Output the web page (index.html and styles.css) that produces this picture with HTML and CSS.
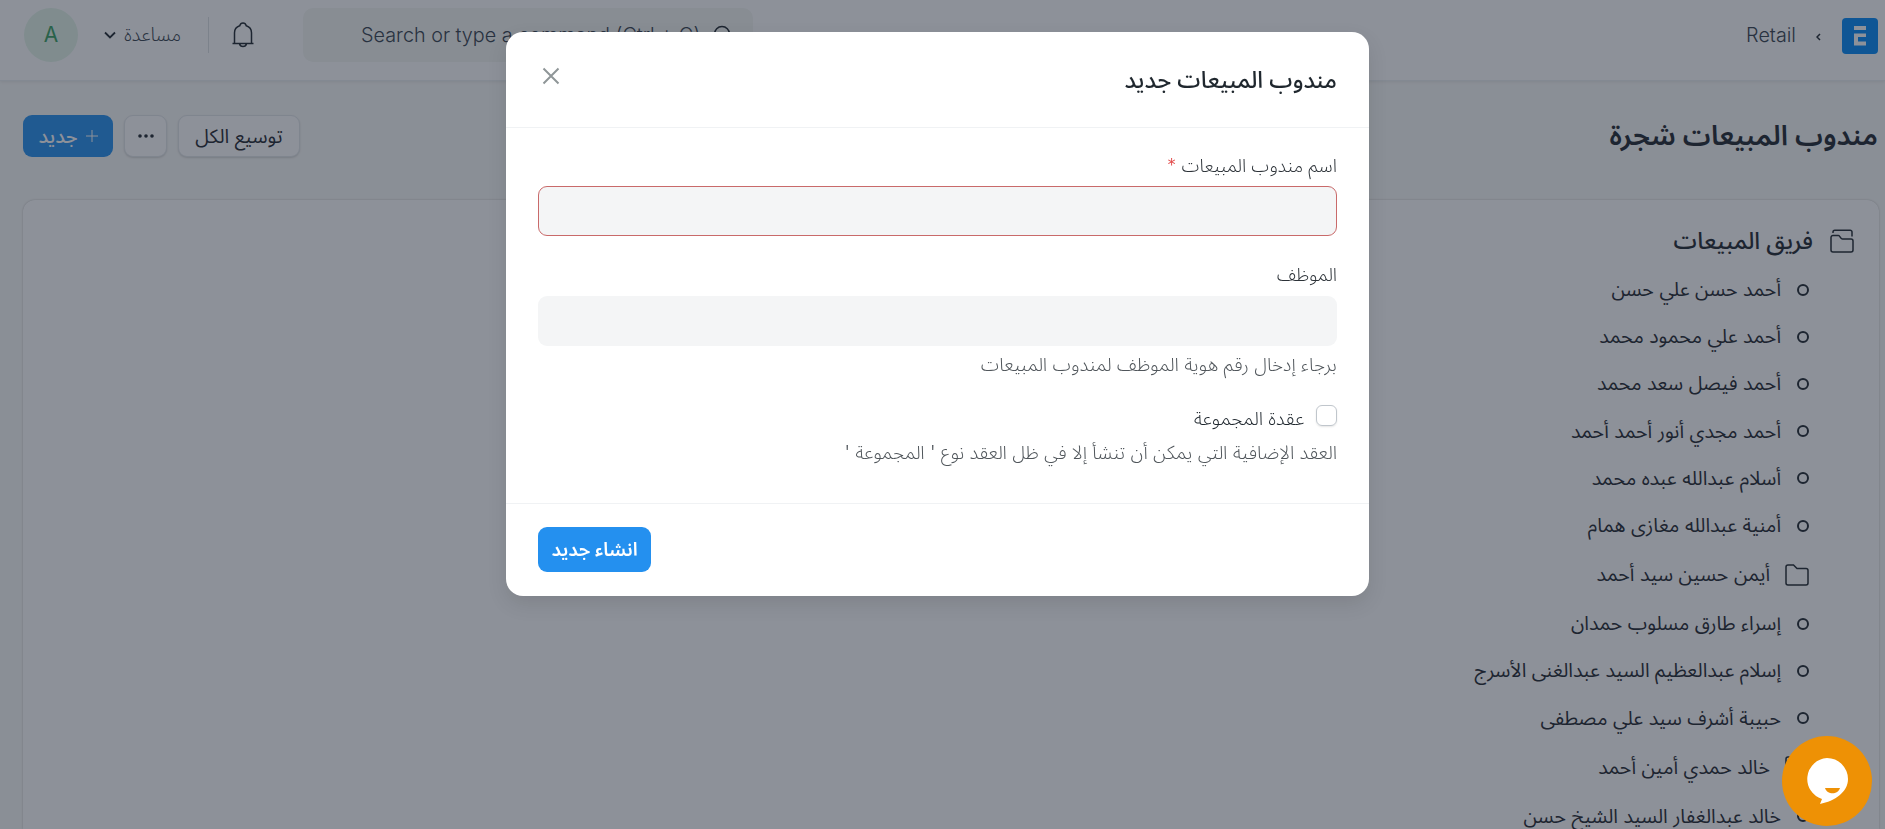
FILE: index.html
```
<!DOCTYPE html>
<html lang="ar" dir="rtl">
<head>
    <meta charset="UTF-8">
    <meta name="viewport" content="width=device-width, initial-scale=1.0">
    <title>مندوب المبيعات شجرة</title>
    <link rel="stylesheet" href="styles.css">
</head>
<body>
    <header class="navbar">
        <div class="brand">
            <svg class="logo" viewBox="0 0 36 36">
                <rect width="36" height="36" rx="4" fill="#0289f7"/>
                <path d="M12 8h12v4H12zM12 15.500h12v3.500h-8v4.500h8v4H12z" fill="#fff"/>
            </svg>
            <svg class="crumb-arrow" viewBox="0 0 5 8"><path d="M4 1L1 4l3 3"/></svg>
            <a class="crumb">Retail</a>
        </div>
        <div class="nav-tools">
            <div class="search">
                <svg class="search-icon" viewBox="0 0 20 20"><circle cx="9" cy="9" r="7.500"/><path d="M14.500 14.500L19 19"/></svg>
                <span class="search-text" dir="ltr">Search or type a command (Ctrl + G)</span>
            </div>
            <svg class="bell" viewBox="0 0 22 26"><path d="M.5 21.500h21M2.500 21.500V10.800a7.500 7.500 0 0 1 5.200-7C8.200 2 9.500 1 11 1s2.800 1 3.300 2.800a7.500 7.500 0 0 1 5.200 7v10.700M7.500 21.700a3.600 3.600 0 0 0 7 0"/></svg>
            <span class="nav-divider"></span>
            <div class="help-menu">
                <span>مساعدة</span>
                <svg class="chevron" viewBox="0 0 12 8"><path d="M1 1.500l5 5 5-5"/></svg>
            </div>
            <span class="avatar">A</span>
        </div>
    </header>

    <div class="page-head">
        <h1 class="page-title">مندوب المبيعات شجرة</h1>
        <div class="page-actions">
            <button class="btn btn-default btn-expand">توسيع الكل</button>
            <button class="btn btn-default btn-more">
                <svg class="dots" viewBox="0 0 16 4"><circle cx="2" cy="2" r="1.800"/><circle cx="8" cy="2" r="1.800"/><circle cx="14" cy="2" r="1.800"/></svg>
            </button>
            <button class="btn btn-primary btn-new">
                <svg class="plus" viewBox="0 0 12 12"><path d="M6 0v12M0 6h12"/></svg>
                <span>جديد</span>
            </button>
        </div>
    </div>

    <main class="tree">
        <div class="tree-root">
            <svg class="folder" viewBox="0 0 24 24"><path d="M3 4V3a1.800 1.800 0 0 1 1.800-1.800h15.400A1.800 1.800 0 0 1 22 3v4.500M1 8.500a2 2 0 0 1 2-2h5.500c1.500 0 2 3.500 4 3.500H21a2 2 0 0 1 2 2v9a2 2 0 0 1-2 2H3a2 2 0 0 1-2-2z"/></svg>
            <span>فريق المبيعات</span>
        </div>
        <ul class="tree-children">
            <li class="leaf">أحمد حسن علي حسن</li>
            <li class="leaf">أحمد علي محمود محمد</li>
            <li class="leaf">أحمد فيصل سعد محمد</li>
            <li class="leaf">أحمد مجدي أنور أحمد أحمد</li>
            <li class="leaf">أسلام عبدالله عبده محمد</li>
            <li class="leaf">أمنية عبدالله مغازى همام</li>
            <li class="branch">
                <svg class="folder" viewBox="0 0 24 24"><path d="M1 4a2 2 0 0 1 2-2h5.500L12 5.500h9a2 2 0 0 1 2 2V20a2 2 0 0 1-2 2H3a2 2 0 0 1-2-2z"/></svg>
                <span>أيمن حسين سيد أحمد</span>
            </li>
            <li class="leaf">إسراء طارق مسلوب حمدان</li>
            <li class="leaf">إسلام عبدالعظيم السيد عبدالغنى الأسرج</li>
            <li class="leaf">حبيبة أشرف سيد علي مصطفى</li>
            <li class="branch">
                <svg class="folder" viewBox="0 0 24 24"><path d="M1 4a2 2 0 0 1 2-2h5.500L12 5.500h9a2 2 0 0 1 2 2V20a2 2 0 0 1-2 2H3a2 2 0 0 1-2-2z"/></svg>
                <span>خالد حمدي أمين أحمد</span>
            </li>
            <li class="leaf">خالد عبدالغفار السيد الشيخ حسن</li>
        </ul>
    </main>

    <div class="modal-backdrop">
        <div class="modal">
            <div class="modal-header">
                <h2 class="modal-title">مندوب المبيعات جديد</h2>
                <svg class="close" viewBox="0 0 18 18"><path d="M1.500 1.500l15 15M16.500 1.500l-15 15"/></svg>
            </div>
            <div class="modal-body">
                <label class="field-label">اسم مندوب المبيعات <span class="required">*</span></label>
                <input class="field-input has-error" type="text">
                <label class="field-label second">الموظف</label>
                <input class="field-input" type="text">
                <p class="field-help">برجاء إدخال رقم هوية الموظف لمندوب المبيعات</p>
                <label class="check-row">
                    <span class="checkbox"></span>
                    <span class="check-label">عقدة المجموعة</span>
                </label>
                <p class="field-help">العقد الإضافية التي يمكن أن تنشأ إلا في ظل العقد نوع ' المجموعة '</p>
            </div>
            <div class="modal-footer">
                <button class="btn btn-primary btn-create">انشاء جديد</button>
            </div>
        </div>
    </div>

    <div class="chat">
        <svg class="chat-icon" viewBox="0 0 42 46"><path d="M21 0a21 21 0 0 1 21 21c0 13-13 22-28 25l2-5A21 21 0 0 1 21 0z" fill="#fff"/><path d="M19 30h15c-2 7-13 7-15 0z" fill="#ee9105"/></svg>
    </div>
</body>
</html>
```
FILE: styles.css
```
* {
    box-sizing: border-box;
}
body {
    margin: 0;
    height: 829px;
    overflow: hidden;
    background-color: #f9faf8;
    color: #1f272e;
    font-family: Inter, "Noto Sans Arabic", "Noto Sans", "DejaVu Sans", sans-serif;
    font-size: 19.600px;
}
svg {
    flex: none;
    fill: none;
    stroke: #1f272e;
    stroke-width: 1.5;
}
.navbar {
    display: flex;
    justify-content: space-between;
    height: 81px;
    padding: 8px 7px 0 24px;
    background-color: white;
    border-bottom: 1px solid #ebeef0;
    box-shadow: 0 1px 3px rgba(0,0,0,0.08);
}
.brand,
.nav-tools,
.help-menu {
    display: flex;
    align-items: center;
    height: 54px;
}
.logo {
    width: 36px;
    height: 36px;
    margin-top: 2px;
    stroke: none;
}
.crumb-arrow {
    width: 5px;
    height: 8px;
    margin: 4px 21px 0 20px;
}
.crumb {
    color: #35414c;
    font-size: 19.800px;
    font-weight: 300;
}
.search {
    display: flex;
    align-items: center;
    width: 450px;
    height: 54px;
    padding-right: 20px;
    border-radius: 10px;
    background-color: #f4f6f3;
}
.search-icon {
    width: 20px;
    height: 20px;
    margin-left: 13px;
}
.search-text {
    color: #35414c;
    font-size: 19.800px;
    font-weight: 300;
    white-space: nowrap;
}
.bell {
    width: 22px;
    height: 26px;
    margin-right: 49px;
}
.nav-divider {
    width: 1px;
    height: 36px;
    margin: 0 23px 0 27px;
    background-color: #dce0e3;
}
.help-menu {
    gap: 8px;
    color: #35414c;
    font-size: 19px;
    font-weight: 300;
}
.chevron {
    width: 12px;
    height: 8px;
    stroke-width: 1.8;
}
.avatar {
    width: 54px;
    height: 54px;
    margin-right: 26px;
    border-radius: 50%;
    background-color: #e4f5e9;
    color: #38a160;
    font-size: 21px;
    line-height: 54px;
    text-align: center;
}
.page-head {
    display: flex;
    align-items: center;
    justify-content: space-between;
    height: 110px;
    padding: 0 7px 0 23px;
}
.page-title {
    margin: 0;
    font-size: 27.900px;
    font-weight: 600;
}
.page-actions {
    display: flex;
    gap: 11px;
}
.btn {
    display: flex;
    align-items: center;
    justify-content: center;
    height: 42px;
    padding: 0;
    border: none;
    border-radius: 9px;
    font-family: inherit;
    font-size: 19.500px;
}
.btn-default {
    background-color: white;
    color: #1f272e;
    border: 1px solid #e2e6e9;
    box-shadow: 0 1px 2px rgba(0,0,0,0.15);
}
.btn-primary {
    background-color: #2490ef;
    color: white;
}
.btn-expand {
    width: 122px;
}
.btn-more {
    width: 43px;
}
.btn-new {
    width: 90px;
    gap: 8px;
    font-weight: 500;
}
.dots {
    width: 16px;
    height: 4px;
    fill: #1f272e;
    stroke: none;
}
.plus {
    width: 12px;
    height: 12px;
    stroke: white;
    stroke-width: 1;
}
.tree {
    height: 629px;
    margin: 9px 6px 0 23px;
    padding: 16px 25px 0 0;
    overflow: hidden;
    border-radius: 12px 12px 0 0;
    background-color: white;
    box-shadow: 0 0 2px rgba(0,0,0,0.25);
}
.tree-root {
    display: flex;
    align-items: center;
    gap: 17px;
    height: 50px;
    font-size: 23.500px;
    font-weight: 500;
}
.folder {
    width: 24px;
    height: 24px;
}
.tree-children {
    margin: 0;
    padding: 0 45px 0 0;
    list-style: none;
}
.leaf,
.branch {
    display: flex;
    align-items: center;
    white-space: nowrap;
}
.leaf {
    gap: 16px;
    height: 47.200px;
}
.leaf::before {
    content: "";
    box-sizing: border-box;
    width: 12px;
    height: 12px;
    border: 2px solid #1f272e;
    border-radius: 50%;
}
.branch {
    gap: 15px;
    height: 51px;
}
.modal-backdrop {
    position: fixed;
    inset: 0;
    display: flex;
    align-items: flex-start;
    justify-content: flex-end;
    padding: 32px 0 0 506px;
    background-color: rgba(27,35,51,0.5);
}
.modal {
    width: 863px;
    height: 564px;
    border-radius: 17px;
    background-color: white;
    box-shadow: 0 8px 20px rgba(0,0,0,0.1);
}
.modal-header {
    display: flex;
    justify-content: space-between;
    height: 96px;
    padding: 0 32px 0 36px;
    border-bottom: 1px solid #f0f2f4;
}
.modal-title {
    margin: 0;
    font-size: 23.300px;
    font-weight: 500;
    line-height: 95px;
}
.close {
    width: 18px;
    height: 18px;
    margin-top: 35px;
    stroke: #8f9698;
    stroke-width: 2;
}
.modal-body {
    height: 376px;
    padding: 21px 32px 0;
    border-bottom: 1px solid #f0f2f4;
    font-size: 18.900px;
    font-weight: 300;
}
.field-label {
    display: block;
    height: 37px;
    color: #2c3238;
    font-size: 18.400px;
    line-height: 32px;
}
.field-label.second {
    margin-top: 22px;
    height: 38px;
}
.required {
    color: #e24c4c;
}
.field-input {
    display: block;
    width: 100%;
    height: 50px;
    border: none;
    border-radius: 9px;
    background-color: #f4f5f6;
}
.field-input.has-error {
    border: 1px solid #c96a6a;
}
.field-help {
    height: 32px;
    margin: 3px 0 0;
    color: #50565b;
    line-height: 32px;
}
.check-row {
    display: flex;
    gap: 12px;
    height: 29px;
    margin-top: 24px;
}
.checkbox {
    width: 21px;
    height: 21px;
    border: 1px solid #c0c6cc;
    border-radius: 6px;
    box-shadow: 0 1px 2px rgba(0,0,0,0.1);
}
.check-label {
    line-height: 28px;
}
.modal-footer {
    display: flex;
    justify-content: flex-end;
    padding: 23px 32px 0;
}
.btn-create {
    width: 113px;
    height: 45px;
    font-size: 18.800px;
    font-weight: 600;
}
.chat {
    position: fixed;
    left: 1782px;
    top: 736px;
    display: flex;
    align-items: center;
    justify-content: center;
    width: 90px;
    height: 90px;
    border-radius: 50%;
    background-color: #ee9105;
}
.chat-icon {
    width: 42px;
    height: 46px;
    stroke: none;
}
```
